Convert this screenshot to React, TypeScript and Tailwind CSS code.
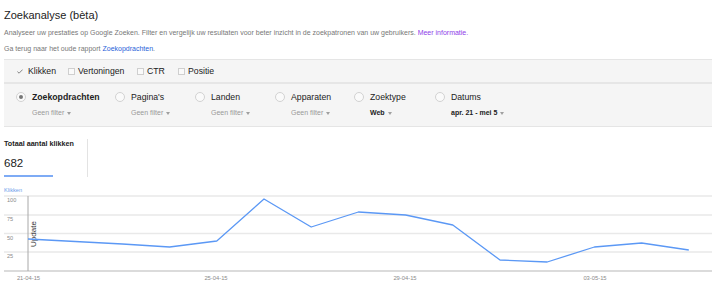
const DIMENSIONS = [
  { name: 'Zoekopdrachten', sub: 'Geen filter', w: 'w-[99px]', active: true, strong: false },
  { name: "Pagina's", sub: 'Geen filter', w: 'w-[80px]', active: false, strong: false },
  { name: 'Landen', sub: 'Geen filter', w: 'w-[80px]', active: false, strong: false },
  { name: 'Apparaten', sub: 'Geen filter', w: 'w-[79px]', active: false, strong: false },
  { name: 'Zoektype', sub: 'Web', w: 'w-[81px]', active: false, strong: true },
  { name: 'Datums', sub: 'apr. 21 - mei 5', w: 'w-[120px]', active: false, strong: true },
];

// y pixel per day, read off the chart (0 = 272, 100 = 197)
const POINTS = [240, 242.5, 245, 248, 242, 200, 228, 213, 216, 226, 261, 263, 248, 244, 251];
const TOP = 195;

function Caret() {
  return (
    <svg width="4" height="3" viewBox="0 0 4 3" className="ml-[3px]">
      <path d="M0 0h4L2 3z" fill="#a0a0a0" />
    </svg>
  );
}

function Chart() {
  const pts = POINTS.map((y, i) => `${28 + i * 47.2},${y - TOP}`).join(' ');
  const grid = [
    { y: 197, label: '100' },
    { y: 216, label: '75' },
    { y: 234.5, label: '50' },
    { y: 253, label: '25' },
  ];
  const ticks = [
    { x: 28.5, label: '21-04-15' },
    { x: 216, label: '25-04-15' },
    { x: 405, label: '29-04-15' },
    { x: 595, label: '03-05-15' },
  ];
  return (
    <svg width="715" height="97" viewBox="0 0 715 97" className="block">
      {grid.map((g) => (
        <g key={g.label}>
          <line x1="4" x2="712" y1={g.y - TOP} y2={g.y - TOP} stroke="#e9e9e9" strokeWidth="1.5" />
          <text x="7" y={g.y - TOP + 6} fontSize="5.6" fill="#8a8a8a" fontFamily="Liberation Sans, Arial, sans-serif">
            {g.label}
          </text>
        </g>
      ))}
      <line x1="4" x2="712" y1="77" y2="77" stroke="#cfcfcf" strokeWidth="1.5" />
      <line x1="28" x2="28" y1="2" y2="77" stroke="#a8a8a8" strokeWidth="1" />
      <text
        x="0"
        y="0"
        transform="translate(33.5 40) rotate(-90)"
        textAnchor="middle"
        dominantBaseline="central"
        fontSize="8"
        fill="#333"
        fontFamily="Liberation Sans, Arial, sans-serif"
      >
        Update
      </text>
      <polyline points={pts} fill="none" stroke="#5b98f5" strokeWidth="1.3" strokeLinejoin="round" />
      {ticks.map((t) => (
        <text key={t.label} x={t.x} y="86" textAnchor="middle" fontSize="5.8" fill="#8a8a8a" fontFamily="Liberation Sans, Arial, sans-serif">
          {t.label}
        </text>
      ))}
    </svg>
  );
}

export default function App() {
  return (
    <div className="h-[292px] w-[715px] overflow-hidden bg-white font-['Liberation_Sans',Arial,sans-serif] text-[#222]">
      {/* Header */}
      <div className="pl-[4px] pt-[9px]">
        <h1 className="text-[11px] leading-[13px] font-normal">Zoekanalyse (bèta)</h1>
        <p className="mt-[6px] text-[7px] leading-[9px] text-[#777]">
          Analyseer uw prestaties op Google Zoeken. Filter en vergelijk uw resultaten voor beter inzicht in de zoekpatronen van uw gebruikers.{' '}
          <span className="text-[#8e3ee8]">Meer informatie.</span>
        </p>
        <p className="mt-[7px] text-[7px] leading-[9px] text-[#777]">
          Ga terug naar het oude rapport <span className="text-[#2962d9]">Zoekopdrachten</span>.
        </p>
      </div>

      {/* Filter panel */}
      <div className="mx-[4px] mt-[6px] w-[708px] border-t border-b border-[#e5e5e5] bg-[#f5f5f5]">
        <div className="flex h-[22px] items-center pl-[13px] text-[8.7px] leading-[11px]">
          <div className="flex w-[51px] items-center">
            <svg width="6" height="5" viewBox="0 0 6 5">
              <path d="M0.4 2.6 2.1 4.2 5.6 0.6" fill="none" stroke="#777" strokeWidth="0.9" />
            </svg>
            <span className="ml-[5px]">Klikken</span>
          </div>
          {[
            { label: 'Vertoningen', w: 'w-[69px]' },
            { label: 'CTR', w: 'w-[41px]' },
            { label: 'Positie', w: 'w-[60px]' },
          ].map((c) => (
            <div key={c.label} className={`flex items-center ${c.w}`}>
              <span className="h-[7px] w-[7px] border border-[#cfcfcf] bg-[#fafafa]" />
              <span className="ml-[3px]">{c.label}</span>
            </div>
          ))}
        </div>
        <div className="border-t-2 border-[#e6e6e6]" />
        <div className="flex h-[42px] pl-[12px] pt-[7px]">
          {DIMENSIONS.map((d) => (
            <div key={d.name} className={`flex flex-col ${d.w}`}>
              <div className="flex h-[12px] items-center">
                <span className="flex h-[10px] w-[10px] items-center justify-center rounded-full border border-[#d2d2d2] bg-[#fafafa]">
                  {d.active && <span className="h-[4px] w-[4px] rounded-full bg-[#777]" />}
                </span>
                <span className={`ml-[6px] text-[8.7px] leading-[12px] ${d.active ? 'font-bold' : ''}`}>{d.name}</span>
              </div>
              <div
                className={`ml-[16px] mt-[6px] flex items-center text-[7px] leading-[8px] ${
                  d.strong ? 'font-bold text-[#222]' : 'text-[#999]'
                }`}
              >
                {d.sub}
                <Caret />
              </div>
            </div>
          ))}
        </div>
      </div>

      {/* Totals */}
      <div className="mt-[12px] flex pl-[4px]">
        <div className="w-[84px] border-r border-[#e3e3e3]">
          <div className="text-[7.2px] leading-[9px] font-bold">Totaal aantal klikken</div>
          <div className="mt-[8px] text-[11.5px] leading-[14px]">682</div>
          <div className="mt-[5px] h-[2px] w-[49px] bg-[#7eabf5]" />
        </div>
      </div>

      {/* Chart */}
      <div className="mt-[10px] pl-[4px] text-[5.6px] leading-[7px] text-[#6d9eeb]">Klikken</div>
      <Chart />
    </div>
  );
}
